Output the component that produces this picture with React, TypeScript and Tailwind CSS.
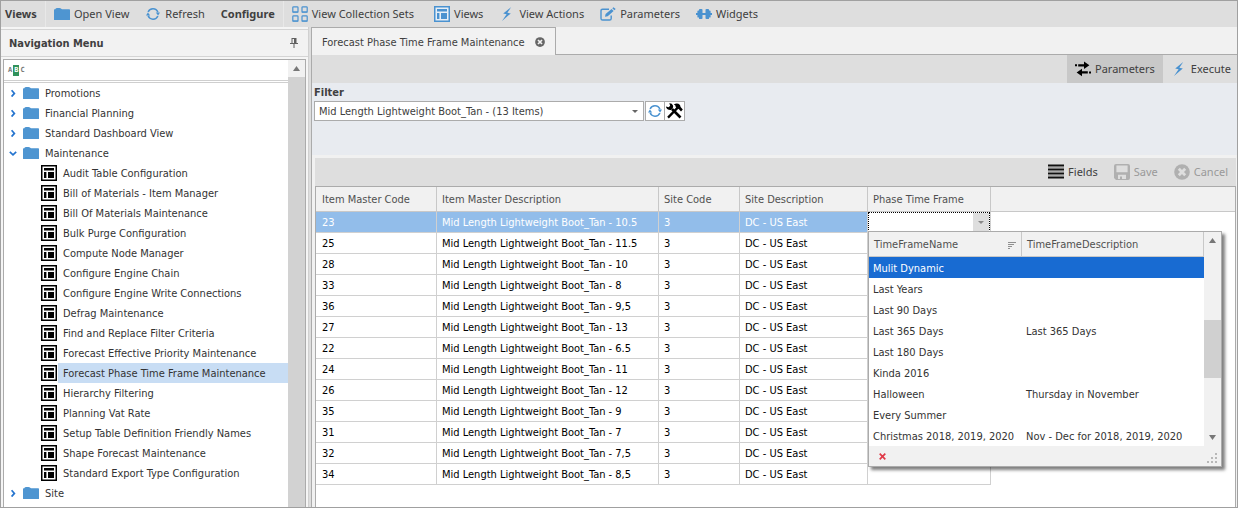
import React from "react";

const treeFont = "font-['DejaVu_Sans_Condensed','DejaVu_Sans',sans-serif]";

function FolderIcon() {
  return (
    <svg width="16" height="14" viewBox="0 0 16 14" className="shrink-0" aria-hidden="true">
      <path d="M0 3V12.4Q0 13 .5 13H15.5Q16 13 16 12.4V3Q16 2.2 15.3 2.2H8L6.5 1.2Q6 .9 5.4 .9H3Q2 .9 1.7 1.5L1.3 2.2H.6Q0 2.4 0 3Z" fill="#4e95d1" />
    </svg>
  );
}

function RefreshIcon({ size }: { size: number }) {
  return (
    <svg width={size} height={size} viewBox="0 0 14 14" className="shrink-0" aria-hidden="true">
      <g fill="none" stroke="#4a92d0" strokeWidth="1.5">
        <path d="M2.1 5A5.3 5.3 0 0 1 11.9 5.2" />
        <path d="M11.9 9A5.3 5.3 0 0 1 2.1 8.8" />
      </g>
      <path d="M9.8 5.6H14L12.1 8.4Z M0 8.4H4.2L1.9 5.6Z" fill="#4a92d0" />
    </svg>
  );
}

function CollectionIcon() {
  return (
    <svg width="16" height="16" viewBox="0 0 16 16" className="shrink-0" aria-hidden="true">
      <g fill="none" stroke="#4a92d0" strokeWidth="1.2">
        <rect x=".8" y=".8" width="5.2" height="5.2" rx=".8" />
        <rect x="10" y=".8" width="5.2" height="5.2" rx=".8" />
        <rect x=".8" y="9.8" width="5.2" height="5.2" rx=".8" />
        <rect x="10" y="9.8" width="5.2" height="5.2" rx=".8" />
      </g>
      <path d="M.5 6.2H6.3M9.7 6.2H15.5M.5 15.2H6.3M9.7 15.2H15.5" stroke="#4a92d0" strokeWidth="1.2" />
    </svg>
  );
}

function ViewIcon({ tone }: { tone: "blue" | "black" }) {
  const c = tone === "blue" ? "#4a92d0" : "#000";
  return (
    <svg width="16" height="16" viewBox="0 0 16 16" className="shrink-0" aria-hidden="true">
      <rect x=".75" y=".75" width="14.5" height="14.5" fill={tone === "blue" ? "#e6eef6" : "#fff"} stroke={c} strokeWidth="1.5" />
      <path d="M3 3H13V5.4H3ZM3 7H5.4V13H3ZM7 7H13V13H7Z" fill={c} />
    </svg>
  );
}

function BoltIcon() {
  return (
    <svg width="16" height="14" viewBox="-3 0 16 14" className="shrink-0" aria-hidden="true">
      <path d="M9.2 0L1.2 6.6L4.6 7.2L0 14L8.8 6.4L5.4 5.8Z" fill="#4a92d0" />
    </svg>
  );
}

function EditIcon() {
  return (
    <svg width="16" height="14" viewBox="0 0 16 14" className="shrink-0" aria-hidden="true">
      <path d="M9 2.2H2.6Q1 2.2 1 3.8V11.4Q1 13 2.6 13H9.6Q11.2 13 11.2 11.4V8.4" fill="none" stroke="#4a92d0" strokeWidth="1.4" />
      <path d="M5 9.8L5.6 7L11.6 1.9L13.6 3.9L7.7 9.3ZM12.3 1.3L13.5 .2L15.7 2.1L14.4 3.3Z" fill="#4a92d0" />
    </svg>
  );
}

function WidgetIcon() {
  return (
    <svg width="16" height="10" viewBox="0 0 16 10" className="shrink-0" aria-hidden="true">
      <path d="M0 4H1.4V2Q1.4 1.4 2.4 1.4H3V.6Q3 0 4 0H5.4Q6.5 0 6.5 .8V4H9.5V.8Q9.5 0 10.6 0H12Q13 0 13 .6V1.4H13.6Q14.6 1.4 14.6 2V4H16V6H14.6V8Q14.6 8.6 13.6 8.6H13V9.4Q13 10 12 10H10.6Q9.5 10 9.5 9.2V6H6.5V9.2Q6.5 10 5.4 10H4Q3 10 3 9.4V8.6H2.4Q1.4 8.6 1.4 8V6H0Z" fill="#4a92d0" />
    </svg>
  );
}

function PinIcon() {
  return (
    <svg width="8" height="10" viewBox="0 0 8 10" aria-hidden="true">
      <path d="M1.5 0H6.5V5H8V6H4.5V10H3.5V6H0V5H1.5ZM2.5 1V5H4V1Z" fill="#606060" fillRule="evenodd" />
    </svg>
  );
}

function ArrowsIcon() {
  return (
    <svg width="16" height="16" viewBox="0 0 16 16" className="shrink-0" aria-hidden="true">
      <path d="M0 3.3H2V5.3H0ZM3.2 3.2H9V.6L14.4 4.3L9 8V5.4H3.2ZM16 10.4H14V12.4H16ZM12.8 10.3H7V7.7L1.6 11.4L7 15.2V12.5H12.8Z" fill="#000" />
    </svg>
  );
}

function ToolsIcon() {
  return (
    <svg width="17" height="16" viewBox="0 0 17 16" aria-hidden="true">
      <path d="M2 14.6L12 4.4" stroke="#000" strokeWidth="2.3" />
      <path d="M6 6L14.5 14.5" stroke="#000" strokeWidth="2.6" />
      <path d="M0 3.4L2.6 4.3L4.2 2.8L3.3 .2Q6 0 7 2.4Q7.4 3.7 6.8 5L5 7Q2.8 7.2 1.2 6Q0 4.8 0 3.4Z" fill="#000" />
      <path d="M7.8 1.6Q11.3 -.6 14 2.1L14.6 4L16.8 6.5L15 8.4L12.7 6L11.2 5.5L9.7 3.9Q9.8 2.2 7.8 1.6Z" fill="#000" />
    </svg>
  );
}

function FieldsIcon() {
  return (
    <svg width="16" height="16" viewBox="0 0 16 16" className="shrink-0" aria-hidden="true">
      <path d="M0 1.5H16M0 5.5H16M0 9.5H16M0 13.5H16" stroke="#111" strokeWidth="2" />
      <path d="M0 3.5H16M0 7.5H16M0 11.5H16" stroke="#aaa" strokeWidth="1" />
    </svg>
  );
}

function SaveIcon() {
  return (
    <svg width="16" height="16" viewBox="0 0 16 16" className="shrink-0" aria-hidden="true">
      <path d="M0 2Q0 0 2 0H14Q16 0 16 2V14Q16 16 14 16H2L0 14ZM2.4 1.4V8.2H13.6V1.4ZM4 10.8V15H6V12.4H8V15H12V10.8Z" fill="#b0b0b0" fillRule="evenodd" />
    </svg>
  );
}

function CircleXIcon({ size, color, hole }: { size: number; color: string; hole: string }) {
  return (
    <svg width={size} height={size} viewBox="0 0 16 16" className="shrink-0" aria-hidden="true">
      <circle cx="8" cy="8" r="7.8" fill={color} />
      <path d="M4.8 4.8L11.2 11.2M11.2 4.8L4.8 11.2" stroke={hole} strokeWidth="2.8" />
    </svg>
  );
}

function Triangle({ dir, color, w = 7 }: { dir: "up" | "down"; color: string; w?: number }) {
  return (
    <svg width={w} height={w > 6 ? 5 : 3} viewBox="0 0 8 4" preserveAspectRatio="none" aria-hidden="true">
      <path d={dir === "up" ? "M4 0L8 4H0Z" : "M0 0H8L4 4Z"} fill={color} />
    </svg>
  );
}

function Chevron({ open }: { open: boolean }) {
  return (
    <svg width="8" height="8" viewBox="0 0 8 8" className="shrink-0" aria-hidden="true">
      <path d={open ? "M.8 2.8L4 5.8L7.2 2.8" : "M2.6 1.2L5.4 4.4L2.6 7.6"} fill="none" stroke="#2474cf" strokeWidth="1.7" />
    </svg>
  );
}

function ToolButton({ icon, label, className = "" }: { icon: React.ReactNode; label: string; className?: string }) {
  return (
    <button type="button" className={`flex h-full items-center gap-1 whitespace-nowrap ${className}`}>
      {icon}
      <span>{label}</span>
    </button>
  );
}

function Folder({ label, open = false }: { label: string; open?: boolean }) {
  return (
    <button type="button" aria-expanded={open} className="flex h-5 w-full items-center pl-[5px] text-left">
      <Chevron open={open} />
      <span className="ml-1.5 flex"><FolderIcon /></span>
      <span className="ml-1.5 pt-[2px]">{label}</span>
    </button>
  );
}

const maintenance = [
  "Audit Table Configuration",
  "Bill of Materials - Item Manager",
  "Bill Of Materials Maintenance",
  "Bulk Purge Configuration",
  "Compute Node Manager",
  "Configure Engine Chain",
  "Configure Engine Write Connections",
  "Defrag Maintenance",
  "Find and Replace Filter Criteria",
  "Forecast Effective Priority Maintenance",
  "Forecast Phase Time Frame Maintenance",
  "Hierarchy Filtering",
  "Planning Vat Rate",
  "Setup Table Definition Friendly Names",
  "Shape Forecast Maintenance",
  "Standard Export Type Configuration",
];

const items: [string, string][] = [
  ["23", "10.5"],
  ["25", "11.5"],
  ["28", "10"],
  ["33", "8"],
  ["36", "9,5"],
  ["27", "13"],
  ["22", "6.5"],
  ["24", "11"],
  ["26", "12"],
  ["35", "9"],
  ["31", "7"],
  ["32", "7,5"],
  ["34", "8,5"],
];

const timeFrames: [string, string][] = [
  ["Mulit Dynamic", ""],
  ["Last Years", ""],
  ["Last 90 Days", ""],
  ["Last 365 Days", "Last 365 Days"],
  ["Last 180 Days", ""],
  ["Kinda 2016", ""],
  ["Halloween", "Thursday in November"],
  ["Every Summer", ""],
  ["Christmas 2018, 2019, 2020", "Nov - Dec for 2018, 2019, 2020"],
];

function TopBar() {
  return (
    <header className="flex h-[26px] items-center bg-[#dedede] pl-1 font-['Noto_Sans',sans-serif] text-[#404040]">
      <span className="w-10 font-bold">Views</span>
      <span className="h-full w-px bg-[#e8e8e8]" />
      <ToolButton icon={<FolderIcon />} label="Open View" className="ml-2" />
      <ToolButton icon={<span className="flex w-4 justify-center"><RefreshIcon size={14} /></span>} label="Refresh" className="ml-4" />
      <span className="ml-4 w-[62px] font-bold">Configure</span>
      <span className="h-full w-px bg-[#e8e8e8]" />
      <ToolButton icon={<CollectionIcon />} label="View Collection Sets" className="ml-2" />
      <ToolButton icon={<ViewIcon tone="blue" />} label="Views" className="ml-5" />
      <ToolButton icon={<BoltIcon />} label="View Actions" className="ml-4" />
      <ToolButton icon={<EditIcon />} label="Parameters" className="ml-4" />
      <ToolButton icon={<WidgetIcon />} label="Widgets" className="ml-4" />
    </header>
  );
}

function NavigationMenu() {
  return (
    <aside className="flex w-[308px] shrink-0 flex-col border-r border-[#d0d0d0] bg-[#f5f5f5] pt-[2px]">
      <div className="flex h-7 shrink-0 items-center justify-between border-y border-[#d4d4d4] bg-[#f2f2f2] pr-2.5 pl-2">
        <h2 className="pt-[2px] font-bold text-[#404040]">Navigation Menu</h2>
        <button type="button" aria-label="Pin"><PinIcon /></button>
      </div>
      <div className="mx-[2px] mt-[2px] flex flex-1 border border-b-0 border-[#ababab] bg-white">
        <div className="min-w-0 flex-1">
          <div className="flex h-[23px] flex-col border-b border-[#cfcfcf]">
            <label className="flex h-[21px] items-center border-b border-[#cfcfcf] pl-1">
              <span className="flex items-center font-['DejaVu_Sans_Mono',monospace] text-[7px] leading-[11px] font-bold text-[#777]">
                A<span className="mx-px bg-[#31925b] px-px text-white">B</span>C
              </span>
              <input aria-label="Search menu" className="min-w-0 flex-1 bg-transparent pl-1 outline-none" />
            </label>
          </div>
          <nav className="pb-1 text-[#333]">
            <Folder label="Promotions" />
            <Folder label="Financial Planning" />
            <Folder label="Standard Dashboard View" />
            <Folder label="Maintenance" open />
            <ul>
              {maintenance.map((name) => (
                <li key={name} className="flex h-5 items-center pl-[37px]">
                  <ViewIcon tone="black" />
                  <a
                    href="#"
                    className={`ml-px flex h-full flex-1 items-center pt-[2px] pl-[5px] ${name.startsWith("Forecast Phase") ? "bg-[#c8ddf4]" : ""}`}
                  >
                    {name}
                  </a>
                </li>
              ))}
            </ul>
            <Folder label="Site" />
          </nav>
        </div>
        <div className="w-[17px] bg-[#d2d2d2]">
          <button type="button" aria-label="Scroll up" className="flex h-[17px] w-full items-center justify-center bg-[#f1f1f1]">
            <Triangle dir="up" color="#777" />
          </button>
        </div>
      </div>
    </aside>
  );
}

function TimeFrameList() {
  return (
    <div className="absolute top-[19px] left-0 z-10 w-[354px] border border-[#ababab] bg-white text-[#333] shadow-[3px_3px_3px_rgba(0,0,0,0.5)]">
      <div className="flex">
        <table className="flex-1 table-fixed border-separate border-spacing-0 text-left">
          <colgroup>
            <col className="w-[153px]" />
            <col />
          </colgroup>
          <thead>
            <tr className="h-[25px] bg-[#f1f1f1] text-[#505050]">
              <th className="border-r border-b border-[#c8c8c8] px-[5px] pt-[2px] font-normal">
                <span className="flex items-center justify-between">
                  TimeFrameName
                  <svg width="8" height="7" viewBox="0 0 8 7" aria-hidden="true">
                    <path d="M0 .5H8M0 2.5H6M0 4.5H4M0 6.5H2" stroke="#909090" />
                  </svg>
                </span>
              </th>
              <th className="border-r border-b border-[#c8c8c8] px-[5px] pt-[2px] font-normal">TimeFrameDescription</th>
            </tr>
          </thead>
          <tbody>
            {timeFrames.map(([name, desc], i) => (
              <tr key={name} className={`h-[21px] whitespace-nowrap ${i === 0 ? "bg-[#186bd2] text-white" : ""}`}>
                <td className="pt-[2px] pl-1">{name}</td>
                <td className="pt-[2px] pl-1">{desc}</td>
              </tr>
            ))}
          </tbody>
        </table>
        <div className="flex w-[17px] flex-col items-center bg-[#f1f1f1]">
          <button type="button" aria-label="Scroll up" className="flex h-[17px] w-full items-center justify-center"><Triangle dir="up" color="#777" /></button>
          <div className="flex-[72]" />
          <div className="w-full flex-[58] bg-[#d0d0d0]" />
          <div className="flex-[52]" />
          <button type="button" aria-label="Scroll down" className="flex h-[17px] w-full items-center justify-center"><Triangle dir="down" color="#777" /></button>
        </div>
      </div>
      <div className="flex h-5 items-center justify-between bg-[#f1f1f1] pr-1 pl-[10px]">
        <button type="button" aria-label="Clear">
          <svg width="7" height="7" viewBox="0 0 7 7" aria-hidden="true"><path d="M.7 .7L6.3 6.3M6.3 .7L.7 6.3" stroke="#e03a48" strokeWidth="1.7" /></svg>
        </button>
        <svg width="10" height="10" viewBox="0 0 10 10" className="mt-1" aria-hidden="true">
          <path d="M8 0H10V2H8ZM4 4H6V6H4ZM8 4H10V6H8ZM0 8H2V10H0ZM4 8H6V10H4ZM8 8H10V10H8Z" fill="#b8b8b8" />
        </svg>
      </div>
    </div>
  );
}

function Grid() {
  const head = "border-r border-b border-[#c8c8c8] pt-[2px] pl-[5px] first:pl-1.5 font-normal";
  const cell = "border-r border-b border-[#d0d0d0] pt-[2px] pl-[5px] first:pl-1.5";
  return (
    <div className="flex-1 border border-b-0 border-[#ababab] bg-white">
      <table className="w-full table-fixed border-separate border-spacing-0 text-left whitespace-nowrap">
        <colgroup>
          <col className="w-[121px]" />
          <col className="w-[222px]" />
          <col className="w-[81px]" />
          <col className="w-[128px]" />
          <col className="w-[123px]" />
          <col />
        </colgroup>
        <thead>
          <tr className="h-[25px] bg-[#f1f1f1] text-[#505050]">
            <th className={head}>Item Master Code</th>
            <th className={head}>Item Master Description</th>
            <th className={head}>Site Code</th>
            <th className={head}>Site Description</th>
            <th className={head}>Phase Time Frame</th>
            <th className="border-b border-[#c8c8c8]" />
          </tr>
        </thead>
        <tbody>
          {items.map(([code, size], i) => {
            const tone = i === 0 ? "bg-[#92bdea] text-white" : "text-black";
            return (
              <tr key={code} className="h-[21px]">
                <td className={`${cell} ${tone}`}>{code}</td>
                <td className={`${cell} ${tone}`}>Mid Length Lightweight Boot_Tan - {size}</td>
                <td className={`${cell} ${tone}`}>3</td>
                <td className={`${cell} ${tone}`}>DC - US East</td>
                {i === 0 ? (
                  <td className="relative border-r border-[#d0d0d0] p-0 align-top">
                    <div className="flex h-5 border border-b-0 border-dotted border-black">
                      <input aria-label="Phase Time Frame" className="min-w-0 flex-1 bg-white outline-none" />
                      <button type="button" aria-label="Open time frames" className="flex w-4 items-center justify-center bg-[#dedede]">
                        <Triangle dir="down" color="#888" w={6} />
                      </button>
                    </div>
                    <TimeFrameList />
                  </td>
                ) : (
                  <td className={cell} />
                )}
                <td />
              </tr>
            );
          })}
        </tbody>
      </table>
    </div>
  );
}

function Workspace() {
  return (
    <main className="ml-[2px] flex min-w-0 flex-1 flex-col bg-[#f1f1f1]">
      <div className="flex h-7 items-stretch">
        <div className="-mb-px flex items-center gap-2.5 border border-b-0 border-[#ababab] bg-[#f2f2f2] pr-2.5 pl-2.5 text-[#404040]">
          <span className="pt-[2px] whitespace-nowrap">Forecast Phase Time Frame Maintenance</span>
          <button type="button" aria-label="Close tab"><CircleXIcon size={10} color="#666" hole="#f2f2f2" /></button>
        </div>
        <div className="flex-1 border-b border-[#ababab]" />
      </div>
      <div className="flex flex-1 flex-col border-l border-[#ababab]">
        <div className="flex h-7 justify-end bg-[#dedede] font-['Noto_Sans',sans-serif] text-[#404040]">
          <ToolButton icon={<ArrowsIcon />} label="Parameters" className="bg-[#c8c8c8] px-2" />
          <ToolButton icon={<BoltIcon />} label="Execute" className="pr-1.5 pl-2" />
        </div>
        <section className="h-[72px] bg-[#e8ebf0] pt-[2px] pl-[2px]">
          <label htmlFor="filter" className="block h-4 leading-4 font-bold text-[#404040]">Filter</label>
          <div className="flex h-5">
            <div className="relative w-[330px]">
              <select id="filter" className="h-5 w-full appearance-none border border-[#ababab] bg-white px-1 pt-[2px] text-[#404040]">
                <option>Mid Length Lightweight Boot_Tan - (13 Items)</option>
              </select>
              <span className="pointer-events-none absolute top-[9px] right-1.5 flex"><Triangle dir="down" color="#666" w={6} /></span>
            </div>
            <button type="button" aria-label="Reload filter" className="ml-px flex w-5 items-center justify-center border border-[#ababab] bg-white"><RefreshIcon size={14} /></button>
            <button type="button" aria-label="Filter settings" className="flex w-5 items-center justify-center border border-l-0 border-[#ababab] bg-white"><ToolsIcon /></button>
          </div>
        </section>
        <section className="flex flex-1 flex-col pt-[3px] pr-[1px] pl-[3px]">
          <div className="flex h-7 justify-end gap-4 bg-[#dedede] pr-2 font-['Noto_Sans',sans-serif] text-[#404040]">
            <ToolButton icon={<FieldsIcon />} label="Fields" />
            <ToolButton icon={<SaveIcon />} label="Save" className="text-[#999]" />
            <ToolButton icon={<CircleXIcon size={16} color="#b0b0b0" hole="#dedede" />} label="Cancel" className="text-[#999]" />
          </div>
          <Grid />
        </section>
      </div>
    </main>
  );
}

export default function App() {
  return (
    <div className={`flex min-h-screen flex-col border border-[#a0a0a0] bg-[#dedede] text-[11px] leading-4 ${treeFont}`}>
      <TopBar />
      <div className="flex flex-1">
        <NavigationMenu />
        <Workspace />
      </div>
    </div>
  );
}
